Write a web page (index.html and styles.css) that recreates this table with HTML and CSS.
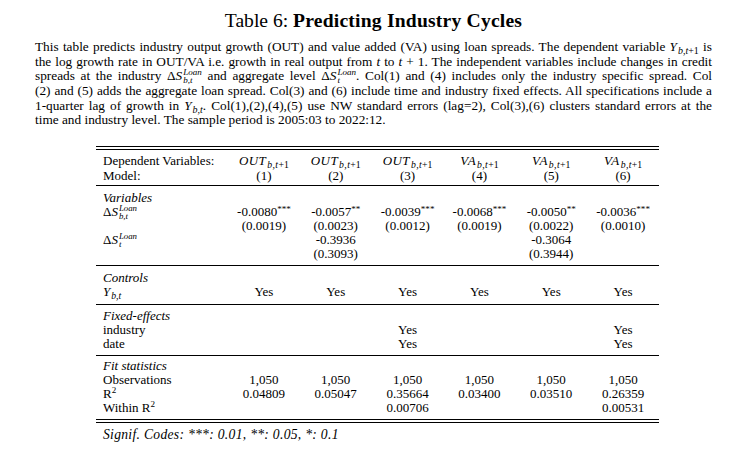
FILE: index.html
```html
<!DOCTYPE html>
<html>
<head>
<meta charset="utf-8">
<link rel="stylesheet" href="styles.css">
</head>
<body>
<div class="page">
  <h1 class="title">Table 6: <b>Predicting Industry Cycles</b></h1>
  <div class="caption">
    <span class="ln">This table predicts industry output growth (OUT) and value added (VA) using loan spreads. The dependent variable <i>Y</i><sub><i>b,t</i>+1</sub> is</span>
    <span class="ln">the log growth rate in OUT/VA i.e. growth in real output from <i>t</i> to <i>t</i> + 1. The independent variables include changes in credit</span>
    <span class="ln">spreads at the industry Δ<i>S</i><span class="ss"><span>Loan</span><span>b,t</span></span> and aggregate level Δ<i>S</i><span class="ss"><span>Loan</span><span>t</span></span>. Col(1) and (4) includes only the industry specific spread. Col</span>
    <span class="ln">(2) and (5) adds the aggregate loan spread. Col(3) and (6) include time and industry fixed effects. All specifications include a</span>
    <span class="ln">1-quarter lag of growth in <i>Y</i><sub><i>b,t</i></sub>. Col(1),(2),(4),(5) use NW standard errors (lag=2), Col(3),(6) clusters standard errors at the</span>
    <span class="ln last">time and industry level. The sample period is 2005:03 to 2022:12.</span>
  </div>

  <div class="tbl">
    <div class="dbl"></div>
    <div class="sec head">
      <div class="lab">Dependent Variables:</div>
      <div class="c"><i>OUT</i><sub><i>b,t</i>+1</sub></div>
      <div class="c"><i>OUT</i><sub><i>b,t</i>+1</sub></div>
      <div class="c"><i>OUT</i><sub><i>b,t</i>+1</sub></div>
      <div class="c"><i>VA</i><sub><i>b,t</i>+1</sub></div>
      <div class="c"><i>VA</i><sub><i>b,t</i>+1</sub></div>
      <div class="c"><i>VA</i><sub><i>b,t</i>+1</sub></div>
      <div class="lab">Model:</div>
      <div class="c">(1)</div><div class="c">(2)</div><div class="c">(3)</div>
      <div class="c">(4)</div><div class="c">(5)</div><div class="c">(6)</div>
    </div>

    <div class="sec">
      <div class="lab full"><i>Variables</i></div>
      <div class="lab">Δ<i>S</i><span class="ss"><span>Loan</span><span>b,t</span></span></div>
      <div class="c">-0.0080<sup class="st">***</sup></div>
      <div class="c">-0.0057<sup class="st">**</sup></div>
      <div class="c">-0.0039<sup class="st">***</sup></div>
      <div class="c">-0.0068<sup class="st">***</sup></div>
      <div class="c">-0.0050<sup class="st">**</sup></div>
      <div class="c">-0.0036<sup class="st">***</sup></div>
      <div class="lab"></div>
      <div class="c">(0.0019)</div><div class="c">(0.0023)</div><div class="c">(0.0012)</div>
      <div class="c">(0.0019)</div><div class="c">(0.0022)</div><div class="c">(0.0010)</div>
      <div class="lab">Δ<i>S</i><span class="ss"><span>Loan</span><span>t</span></span></div>
      <div class="c"></div><div class="c">-0.3936</div><div class="c"></div>
      <div class="c"></div><div class="c">-0.3064</div><div class="c"></div>
      <div class="lab"></div>
      <div class="c"></div><div class="c">(0.3093)</div><div class="c"></div>
      <div class="c"></div><div class="c">(0.3944)</div><div class="c"></div>
    </div>

    <div class="sec ctrl">
      <div class="lab full"><i>Controls</i></div>
      <div class="lab"><i>Y</i><sub><i>b,t</i></sub></div>
      <div class="c">Yes</div><div class="c">Yes</div><div class="c">Yes</div>
      <div class="c">Yes</div><div class="c">Yes</div><div class="c">Yes</div>
    </div>

    <div class="sec fixed">
      <div class="lab full"><i>Fixed-effects</i></div>
      <div class="lab">industry</div>
      <div class="c"></div><div class="c"></div><div class="c">Yes</div>
      <div class="c"></div><div class="c"></div><div class="c">Yes</div>
      <div class="lab">date</div>
      <div class="c"></div><div class="c"></div><div class="c">Yes</div>
      <div class="c"></div><div class="c"></div><div class="c">Yes</div>
    </div>

    <div class="sec last">
      <div class="lab full"><i>Fit statistics</i></div>
      <div class="lab">Observations</div>
      <div class="c">1,050</div><div class="c">1,050</div><div class="c">1,050</div>
      <div class="c">1,050</div><div class="c">1,050</div><div class="c">1,050</div>
      <div class="lab">R<sup class="sq">2</sup></div>
      <div class="c">0.04809</div><div class="c">0.05047</div><div class="c">0.35664</div>
      <div class="c">0.03400</div><div class="c">0.03510</div><div class="c">0.26359</div>
      <div class="lab">Within R<sup class="sq">2</sup></div>
      <div class="c"></div><div class="c"></div><div class="c">0.00706</div>
      <div class="c"></div><div class="c"></div><div class="c">0.00531</div>
    </div>
    <div class="dbl"></div>
    <div class="note"><i>Signif. Codes: ***: 0.01, **: 0.05, *: 0.1</i></div>
  </div>
</div>
</body>
</html>
```
FILE: styles.css
```css
html, body {
  margin: 0;
  padding: 0;
  background: #fff;
}
body {
  font-family: "Liberation Serif", "Times New Roman", serif;
  color: #000;
}
.page {
  width: 677px;
  padding-left: 35px;
}
.title {
  margin: 0;
  padding-top: 10px;
  height: 22px;
  line-height: 22px;
  font-size: 19.6px;
  font-weight: normal;
  text-align: center;
}
.title b {
  font-weight: bold;
  letter-spacing: 0.2px;
}
.caption {
  margin-top: 8px;
  font-size: 13.3px;
}
.ln {
  display: block;
  height: 14.7px;
  line-height: 14.7px;
  text-align: justify;
  text-align-last: justify;
  white-space: nowrap;
}
.ln.last {
  text-align-last: left;
}
sub {
  font-size: 0.75em;
  line-height: 0;
  vertical-align: -0.3em;
  padding-left: 1px;
}
sub i, .ss i {
  font-style: italic;
}
.ss {
  display: inline-flex;
  flex-direction: column;
  font-size: 0.68em;
  line-height: 0.92;
  font-style: italic;
  vertical-align: 0.6em;
  margin: -1em 0 -1em 1px;
}
.tbl {
  width: 563px;
  margin-left: 61px;
  margin-top: 18px;
  font-size: 13px;
}
.dbl {
  height: 2px;
  border-top: 1px solid #000;
  border-bottom: 1px solid #000;
}
.sec {
  display: grid;
  grid-template-columns: 132px repeat(6, 1fr);
  grid-auto-rows: 14px;
  line-height: 14px;
  padding: 5px 0 4px;
  border-bottom: 1px solid #000;
}
.sec.head {
  grid-auto-rows: 15px;
  line-height: 15px;
  padding: 3px 0 2px;
}
.sec.ctrl {
  padding-bottom: 5px;
}
.sec.fixed {
  padding-top: 4px;
}
.sec.last {
  border-bottom: none;
  padding: 3px 0 4px;
}
.lab {
  padding-left: 7px;
  white-space: nowrap;
}
.lab.full {
  grid-column: 1 / -1;
}
.c {
  text-align: center;
  white-space: nowrap;
}
.head .c i {
  letter-spacing: 0.4px;
}
.head sub {
  vertical-align: -0.25em;
}
.st {
  font-size: 0.7em;
  line-height: 0;
  vertical-align: 0.45em;
}
.sq {
  font-size: 0.7em;
  line-height: 0;
  vertical-align: 0.55em;
}
.note {
  padding: 5px 0 0 7px;
  line-height: 14px;
  font-size: 13.6px;
  letter-spacing: 0.3px;
}
```
